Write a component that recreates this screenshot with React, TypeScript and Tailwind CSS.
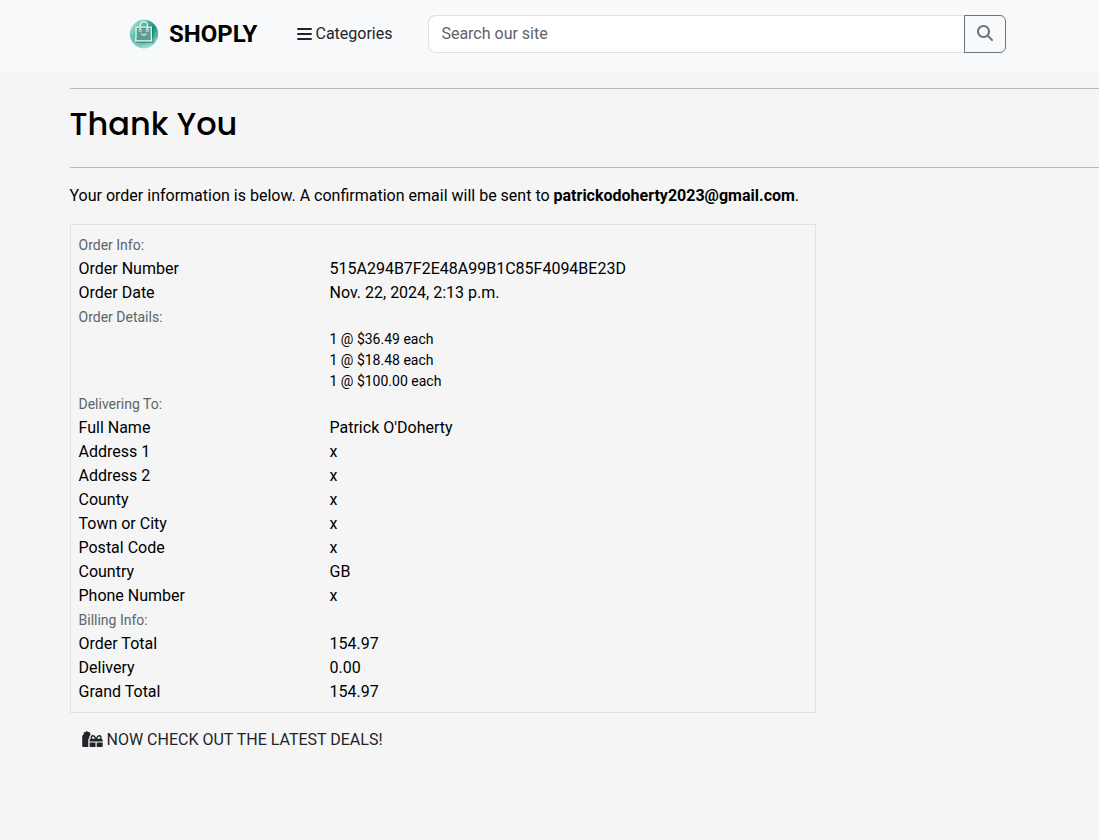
import React from "react";
import { FaMagnifyingGlass } from "react-icons/fa6";

type Row = [string, string];

const orderInfo: Row[] = [
  ["Order Number", "515A294B7F2E48A99B1C85F4094BE23D"],
  ["Order Date", "Nov. 22, 2024, 2:13 p.m."],
];
const items = ["1 @ $36.49 each", "1 @ $18.48 each", "1 @ $100.00 each"];
const delivery: Row[] = [
  ["Full Name", "Patrick O'Doherty"],
  ["Address 1", "x"],
  ["Address 2", "x"],
  ["County", "x"],
  ["Town or City", "x"],
  ["Postal Code", "x"],
  ["Country", "GB"],
  ["Phone Number", "x"],
];
const billing: Row[] = [
  ["Order Total", "154.97"],
  ["Delivery", "0.00"],
  ["Grand Total", "154.97"],
];

function Heading({ children }: { children: React.ReactNode }) {
  return <div className="h-6 text-sm leading-6 text-[#5e6468]">{children}</div>;
}

function Rows({ rows }: { rows: Row[] }) {
  return (
    <dl>
      {rows.map(([label, value]) => (
        <div key={label} className="flex h-6">
          <dt className="w-[251px] shrink-0">{label}</dt>
          <dd>{value}</dd>
        </div>
      ))}
    </dl>
  );
}

function Logo() {
  return (
    <svg viewBox="0 0 30 30" fill="none" className="mr-[10px] size-[30px] shrink-0">
      <defs>
        <linearGradient id="disc" x1="0" y1="0.1" x2="1" y2="0.8">
          <stop offset="0" stopColor="#c0e9da" />
          <stop offset="0.3" stopColor="#65c3ae" />
          <stop offset="0.65" stopColor="#16917f" />
          <stop offset="1" stopColor="#8ed6c2" />
        </linearGradient>
        <linearGradient id="base" x1="0" y1="0" x2="0" y2="1">
          <stop offset="0.6" stopColor="#bcebdc" stopOpacity="0" />
          <stop offset="1" stopColor="#bcebdc" stopOpacity="0.8" />
        </linearGradient>
      </defs>
      <circle cx="15" cy="15" r="14.2" fill="url(#disc)" />
      <circle cx="15" cy="15" r="14.2" fill="url(#base)" />
      <path d="M8 9.2h15.4l.4 14H8z" stroke="#176d62" strokeOpacity="0.55" strokeWidth="1.4" />
      <path d="M7.2 8.2h15l.3 13.6H6.8z" fill="#5d9c91" stroke="#e1f4ed" strokeWidth="1.3" />
      <path d="M11.2 11V6.1a3.6 3.6 0 0 1 7.2 0V11" stroke="#e1f4ed" strokeWidth="1.3" />
      <circle cx="11.2" cy="11.4" r="1.3" stroke="#e1f4ed" strokeWidth="0.8" />
      <circle cx="18.4" cy="11.4" r="1.3" stroke="#e1f4ed" strokeWidth="0.8" />
      <path d="M12.2 14.7q2.6 3 5.2 0" stroke="#e1f4ed" strokeWidth="1.2" />
    </svg>
  );
}

function Bars() {
  return (
    <svg viewBox="0 0 15 16" className="h-4 w-[15px]" fill="currentColor">
      <path d="M.3 2h14.4v2H.3zM.3 7h14.4v2H.3zM.3 12h14.4v2H.3z" />
    </svg>
  );
}

function Gifts() {
  return (
    <svg viewBox="0 0 21 16" className="-mt-0.5 h-4 w-[21px]" fill="currentColor">
      <path d="M1.7 1.3 3.2 1.2 4.7.1l1.5 1 1.6.1.2 1.4.8.9-.9 1c-.7.7-.8 1.6-.5 2.5-.7.4-1.1 1-1.1 1.8V16H1.5C.7 16 .2 15.500.2 14.700V5.500c0-1.100.7-1.900 1.700-2.300z" />
      <path d="M7.6 14.700V11.500h5.900V16H8.900c-.8 0-1.300-.5-1.300-1.300zM14.700 11.500h6v3.200c0 .8-.5 1.300-1.300 1.300h-4.700zM7.600 10.400V9.300C7.600 8.500 8.100 8 8.900 8h10.500c.8 0 1.300.5 1.300 1.300v1.100z" />
      <path d="M14.100 8.400 12.700 5.900c-.8-1.400-2.700-1.500-3.300-.2-.6 1.400.3 2.700 1.800 2.700zm0 0 1.400-2.500c.8-1.400 2.700-1.500 3.300-.2.6 1.400-.3 2.700-1.800 2.700z" fill="none" stroke="currentColor" strokeWidth="1.400" />
    </svg>
  );
}

export default function App() {
  return (
    <div className="h-[840px] overflow-hidden bg-[#f5f5f5] font-['Roboto',sans-serif] text-base leading-6 text-black">
      <header className="flex h-[72px] items-start bg-[#f8f9fa] pl-[129px] pt-[15px]">
        <div className="flex h-[38px] w-[168px] items-center text-2xl font-bold">
          <Logo />
          SHOPLY
        </div>
        <button className="flex h-[38px] w-[131px] items-center gap-[3.5px] text-[#212529]">
          <Bars />
          Categories
        </button>
        <div className="flex h-[38px] w-[578px]">
          <input placeholder="Search our site" className="min-w-0 flex-1 rounded-l-lg border border-r-0 border-[#dee2e6] bg-white px-[12.4px] outline-none placeholder:text-[#5e6468]" />
          <button className="flex w-[42px] items-center justify-center rounded-r-md border border-[#6c757d] pb-[2px] text-[#6c757d]">
            <FaMagnifyingGlass className="size-4" />
          </button>
        </div>
      </header>
      <main className="pl-[69.5px] pt-4">
        <hr className="border-[#b8b8b8]" />
        <h2 className="mt-4 h-[38px] font-['Poppins',sans-serif] text-[32px] font-medium leading-[38px]">Thank You</h2>
        <hr className="mt-6 border-[#b8b8b8]" />
        <p className="mt-4">
          Your order information is below. A confirmation email will be sent to <strong>patrickodoherty2023@gmail.com</strong>.
        </p>
        <section className="mt-4 h-[489px] w-[746px] border border-[#dee2e6] p-2">
          <Heading>Order Info:</Heading>
          <Rows rows={orderInfo} />
          <Heading>Order Details:</Heading>
          <ul className="pl-[251px] text-sm leading-[21px]">
            {items.map((item) => <li key={item}>{item}</li>)}
          </ul>
          <Heading>Delivering To:</Heading>
          <Rows rows={delivery} />
          <Heading>Billing Info:</Heading>
          <Rows rows={billing} />
        </section>
        <a className="mt-[15px] flex h-6 items-center gap-1 pl-3 text-[#212529]">
          <Gifts />
          NOW CHECK OUT THE LATEST DEALS!
        </a>
      </main>
    </div>
  );
}
